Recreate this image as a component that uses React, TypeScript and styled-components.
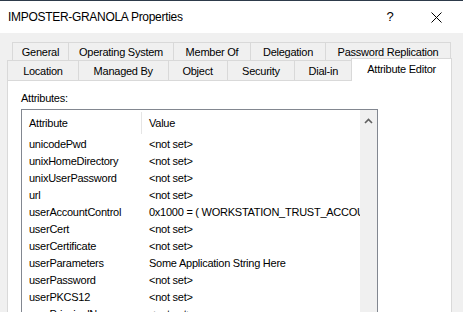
import styled, { createGlobalStyle } from 'styled-components'

const GlobalStyle = createGlobalStyle`
  html, body {
    margin: 0;
    padding: 0;
    background: #f0f0f0;
  }
  body {
    font-family: 'Liberation Sans', Arial, sans-serif;
    font-size: 11px;
    letter-spacing: -0.25px;
    color: #000;
  }
`

type Tab = { label: string; width: number }

const topTabs: Tab[] = [
  { label: 'General', width: 57 },
  { label: 'Operating System', width: 106 },
  { label: 'Member Of', width: 78 },
  { label: 'Delegation', width: 76 },
  { label: 'Password Replication', width: 126 },
]

const bottomTabs: Tab[] = [
  { label: 'Location', width: 72 },
  { label: 'Managed By', width: 91 },
  { label: 'Object', width: 60 },
  { label: 'Security', width: 69 },
  { label: 'Dial-in', width: 58 },
]

const attributes: [string, string][] = [
  ['unicodePwd', '<not set>'],
  ['unixHomeDirectory', '<not set>'],
  ['unixUserPassword', '<not set>'],
  ['url', '<not set>'],
  ['userAccountControl', '0x1000 = ( WORKSTATION_TRUST_ACCOUNT )'],
  ['userCert', '<not set>'],
  ['userCertificate', '<not set>'],
  ['userParameters', 'Some Application String Here'],
  ['userPassword', '<not set>'],
  ['userPKCS12', '<not set>'],
  ['userPrincipalName', '<not set>'],
]

const App = () => {
  return (
    <>
      <GlobalStyle />
      <Window>
        <TitleBar>
          <Title>IMPOSTER-GRANOLA Properties</Title>
          <HelpButton>?</HelpButton>
          <CloseButton>
            <svg width='11' height='11' viewBox='0 0 11 11'>
              <path d='M0.5 0.5 L10.5 10.5 M10.5 0.5 L0.5 10.5' stroke='#000' strokeWidth='1' />
            </svg>
          </CloseButton>
        </TitleBar>

        <Body>
          <TabRow indent={5}>
            {topTabs.map(t => (
              <TabItem key={t.label} width={t.width}>
                {t.label}
              </TabItem>
            ))}
          </TabRow>
          <TabRow indent={0} tall>
            {bottomTabs.map(t => (
              <TabItem key={t.label} width={t.width} tall>
                {t.label}
              </TabItem>
            ))}
            <ActiveTab>Attribute Editor</ActiveTab>
          </TabRow>

          <Panel>
            <Label>Attributes:</Label>
            <ListBox>
              <ListArea>
                <HeaderRow>
                  <HeaderCell width={120}>Attribute</HeaderCell>
                  <HeaderCell>Value</HeaderCell>
                </HeaderRow>
                {attributes.map(([name, value]) => (
                  <Row key={name}>
                    <Cell width={120}>{name}</Cell>
                    <Cell>{value}</Cell>
                  </Row>
                ))}
              </ListArea>
              <ScrollBar>
                <svg width='9' height='6' viewBox='0 0 9 6'>
                  <path d='M1 5 L4.5 1.5 L8 5' stroke='#606060' strokeWidth='1.6' fill='none' />
                </svg>
              </ScrollBar>
            </ListBox>
          </Panel>
        </Body>
      </Window>
    </>
  )
}

export default App

const Window = styled.div`
  width: 463px;
  height: 312px;
  overflow: hidden;
  display: flex;
  flex-direction: column;
  border-top: 1px solid #2d3a4a;
  box-sizing: border-box;
`

const TitleBar = styled.div`
  height: 32px;
  flex-shrink: 0;
  background: #fff;
  display: flex;
  align-items: center;
  padding-left: 8px;
`

const Title = styled.div`
  flex: 1;
  font-size: 12px;
  letter-spacing: -0.3px;
  padding-bottom: 1px;
`

const HelpButton = styled.div`
  width: 46px;
  text-align: center;
  font-size: 13px;
  padding-bottom: 1px;
`

const CloseButton = styled.div`
  width: 46px;
  display: flex;
  justify-content: center;
  align-items: center;
  padding-right: 4px;
`

const Body = styled.div`
  flex: 1;
  display: flex;
  flex-direction: column;
  padding: 9px 11px 0 7px;
  min-height: 0;
`

const TabRow = styled.div<{ indent: number; tall?: boolean }>`
  display: flex;
  align-items: flex-end;
  height: ${p => (p.tall ? 20 : 18)}px;
  padding-left: ${p => p.indent}px;
`

const TabItem = styled.div<{ width: number; tall?: boolean }>`
  width: ${p => p.width}px;
  height: ${p => (p.tall ? 20 : 18)}px;
  box-sizing: border-box;
  border: 1px solid #d9d9d9;
  border-bottom: none;
  margin-left: -1px;
  display: flex;
  align-items: center;
  justify-content: center;
  background: #f0f0f0;
  white-space: nowrap;
  &:first-child {
    margin-left: 0;
  }
`

const ActiveTab = styled.div`
  width: 101px;
  height: 23px;
  margin-left: -1px;
  margin-bottom: -1px;
  box-sizing: border-box;
  border: 1px solid #d9d9d9;
  border-bottom: none;
  background: #fff;
  display: flex;
  align-items: flex-start;
  justify-content: center;
  padding-top: 4px;
  position: relative;
  z-index: 1;
  white-space: nowrap;
`

const Panel = styled.div`
  flex: 1;
  background: #fff;
  border: 1px solid #d9d9d9;
  border-bottom: none;
  padding: 9px 0 0 13px;
  min-height: 0;
  display: flex;
  flex-direction: column;
`

const Label = styled.div`
  height: 16px;
  line-height: 16px;
`

const ListBox = styled.div`
  margin-top: 3px;
  width: 357px;
  flex: 1;
  min-height: 0;
  box-sizing: border-box;
  border: 1px solid #828790;
  border-bottom: none;
  display: flex;
  overflow: hidden;
`

const ListArea = styled.div`
  flex: 1;
  min-width: 0;
  overflow: hidden;
`

const ScrollBar = styled.div`
  width: 17px;
  flex-shrink: 0;
  background: #f0f0f0;
  display: flex;
  justify-content: center;
  padding-top: 8px;
  box-sizing: border-box;
`

const HeaderRow = styled.div`
  display: flex;
  height: 25px;
  align-items: center;
`

const HeaderCell = styled.div<{ width?: number }>`
  width: ${p => (p.width ? `${p.width}px` : 'auto')};
  flex: ${p => (p.width ? 'none' : 1)};
  box-sizing: border-box;
  padding-left: 7px;
  height: 22px;
  line-height: 22px;
  border-right: ${p => (p.width ? '1px solid #e5e5e5' : 'none')};
  white-space: nowrap;
`

const Row = styled.div`
  display: flex;
  height: 17px;
  align-items: center;
`

const Cell = styled.div<{ width?: number }>`
  width: ${p => (p.width ? `${p.width}px` : 'auto')};
  flex: ${p => (p.width ? 'none' : 1)};
  box-sizing: border-box;
  padding-left: 7px;
  white-space: nowrap;
  overflow: hidden;
`
